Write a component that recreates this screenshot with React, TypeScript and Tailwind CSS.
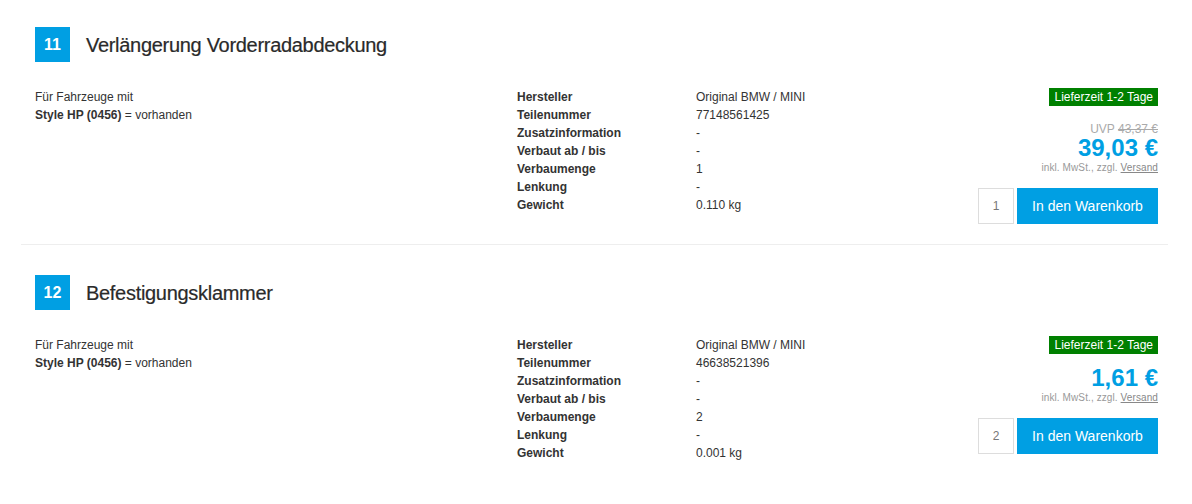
import React from "react";

type Part = {
  pos: number;
  title: string;
  number: string;
  quantity: string;
  weight: string;
  uvp?: string;
  price: string;
  qty: number;
};

const parts: Part[] = [
  {
    pos: 11,
    title: "Verlängerung Vorderradabdeckung",
    number: "77148561425",
    quantity: "1",
    weight: "0.110 kg",
    uvp: "43,37 €",
    price: "39,03 €",
    qty: 1,
  },
  {
    pos: 12,
    title: "Befestigungsklammer",
    number: "46638521396",
    quantity: "2",
    weight: "0.001 kg",
    price: "1,61 €",
    qty: 2,
  },
];

const PartRow = ({ part, last }: { part: Part; last: boolean }) => {
  const details: [string, string][] = [
    ["Hersteller", "Original BMW / MINI"],
    ["Teilenummer", part.number],
    ["Zusatzinformation", "-"],
    ["Verbaut ab / bis", "-"],
    ["Verbaumenge", part.quantity],
    ["Lenkung", "-"],
    ["Gewicht", part.weight],
  ];

  return (
    <div
      className={
        last
          ? "pt-[30px] pb-5 pl-[14px] pr-[10px]"
          : "pt-[27px] pb-5 pl-[14px] pr-[10px] border-b border-[#eeeeee]"
      }
    >
      {/* Header */}
      <div className="flex items-center gap-4 h-[35px]">
        <div className="w-[35px] h-[35px] bg-[#009fe3] text-white font-bold text-[16px] flex items-center justify-center">
          {part.pos}
        </div>
        <h2 className="text-[20px] text-[#2a2a2a] tracking-[-0.3px] [-webkit-text-stroke:0.2px_#2a2a2a]">
          {part.title}
        </h2>
      </div>

      {/* Body */}
      <div className="flex mt-[26px] text-[12px] leading-[18px] text-[#333333]">
        {/* Left side - vehicle info */}
        <div className="w-[482px] shrink-0">
          <div>Für Fahrzeuge mit</div>
          <div>
            <span className="font-bold">Style HP (0456)</span> = vorhanden
          </div>
        </div>

        {/* Middle - details */}
        <div className="w-[360px] shrink-0">
          {details.map(([label, value]) => (
            <div key={label} className="flex">
              <span className="w-[179px] font-bold">{label}</span>
              <span>{value}</span>
            </div>
          ))}
        </div>

        {/* Right - price & cart */}
        <div className="flex-1 flex flex-col items-end">
          <span className="bg-[#008000] text-white h-[18px] leading-[18px] px-[5px]">
            Lieferzeit 1-2 Tage
          </span>
          <div className="mt-[14px] flex flex-col items-end">
            {part.uvp && (
              <div className="text-[#aaaaaa] leading-[18px]">
                UVP <span className="line-through">{part.uvp}</span>
              </div>
            )}
            <div className="text-[24px] leading-[20px] font-bold text-[#009fe3]">
              {part.price}
            </div>
            <div className="text-[10px] leading-[20px] text-[#999999] tracking-[0.1px]">
              inkl. MwSt., zzgl. <span className="underline text-[#888888]">Versand</span>
            </div>
          </div>
          <div className="flex gap-[3px] mt-[10px]">
            <div className="w-[36px] h-[36px] border border-[#dddddd] flex items-center justify-center text-[#777777] text-[12px]">
              {part.qty}
            </div>
            <button className="w-[141px] h-[36px] bg-[#009fe3] text-white text-[14px]">
              In den Warenkorb
            </button>
          </div>
        </div>
      </div>
    </div>
  );
};

const App = () => {
  return (
    <div
      className="w-[1192px] h-[504px] bg-white pl-[21px] pr-[24px] overflow-hidden"
      style={{ fontFamily: '"Liberation Sans", Arial, sans-serif' }}
    >
      {parts.map((part, i) => (
        <PartRow key={part.pos} part={part} last={i === parts.length - 1} />
      ))}
    </div>
  );
};

export default App;
